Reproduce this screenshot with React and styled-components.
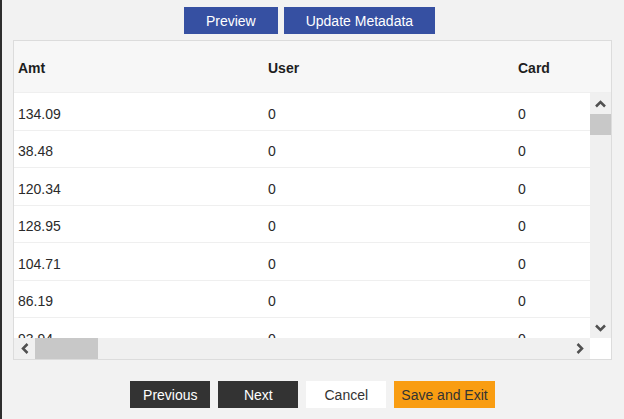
import styled, {createGlobalStyle} from 'styled-components';

const GlobalStyle = createGlobalStyle`
  html, body {
    margin: 0;
    padding: 0;
    height: 100%;
    overflow: hidden;
    background: #f2f2f2;
  }
`;

const Page = styled.div`
  font-family: 'Liberation Sans', Arial, sans-serif;
  font-size: 14px;
  box-sizing: border-box;
  height: 100vh;
  border-left: 2px solid #2e2e2e;
  padding: 7px 12px 0 11px;
  display: flex;
  flex-direction: column;
`;

const Toolbar = styled.div`
  display: flex;
  justify-content: center;
  gap: 6px;
  padding-right: 6px;
  margin-bottom: 6px;
`;

const Button = styled.button`
  font-family: inherit;
  font-size: 14px;
  height: 27px;
  border: none;
  border-radius: 0;
  padding: ${({$wide}) => ($wide ? '0 22px' : '0 7px')};
  min-width: ${({$wide}) => ($wide ? '0' : '80px')};
  cursor: pointer;
  background: ${({$variant}) =>
    ({primary: '#3650a2', dark: '#333333', light: '#ffffff', warn: '#f99d12'})[$variant]};
  color: ${({$variant}) => ($variant === 'primary' || $variant === 'dark' ? '#ffffff' : '#333333')};
`;

const Panel = styled.div`
  height: 320px;
  box-sizing: border-box;
  border: 1px solid #dcdcdc;
  background: #ffffff;
  display: flex;
  flex-direction: column;
  overflow: hidden;
`;

const HeaderRow = styled.div`
  height: 52px;
  box-sizing: border-box;
  flex: none;
  display: flex;
  background: #f7f7f7;
  border-bottom: 1px solid #efefef;
  padding-top: 3px;
  overflow: hidden;
`;

const HeadCell = styled.div`
  flex: none;
  width: 250px;
  padding-left: 4px;
  box-sizing: border-box;
  display: flex;
  align-items: center;
  font-weight: bold;
  color: #1e1e1e;
`;

const Body = styled.div`
  flex: 1;
  min-height: 0;
  display: grid;
  grid-template-columns: 1fr 21px;
  grid-template-rows: 1fr 21px;
`;

const Viewport = styled.div`
  overflow: hidden;
  min-width: 0;
  min-height: 0;
`;

const Row = styled.div`
  display: flex;
  height: 37.5px;
  box-sizing: border-box;
  border-bottom: 1px solid #efefef;
  padding-top: 5px;
`;

const Cell = styled.div`
  flex: none;
  width: 250px;
  padding-left: 4px;
  box-sizing: border-box;
  display: flex;
  align-items: center;
  color: #2a2a2a;
`;

const Track = styled.div`
  background: #f0f0f0;
  display: flex;
  flex-direction: ${({$vertical}) => ($vertical ? 'column' : 'row')};
`;

const Arrow = styled.div`
  flex: none;
  width: 21px;
  height: 21px;
  display: flex;
  align-items: center;
  justify-content: center;
  margin-left: ${({$end}) => ($end ? 'auto' : '0')};
  margin-top: ${({$endV}) => ($endV ? 'auto' : '0')};
`;

const Thumb = styled.div`
  flex: none;
  background: #c8c8c8;
  width: ${({$vertical}) => ($vertical ? '21px' : '63px')};
  height: 21px;
`;

const Corner = styled.div`
  background: #ffffff;
`;

const Footer = styled.div`
  display: flex;
  justify-content: center;
  gap: 8px;
  margin-top: 21px;
`;

const chevrons = {
  up: '1,6.5 5.5,2 10,6.5',
  down: '1,1.5 5.5,6 10,1.5',
  left: '6.5,1 2,5.5 6.5,10',
  right: '1.5,1 6,5.5 1.5,10',
};

function Chevron({dir}) {
  const vertical = dir === 'up' || dir === 'down';
  return (
    <svg width={vertical ? 11 : 8} height={vertical ? 8 : 11} viewBox={vertical ? '0 0 11 8' : '0 0 8 11'}>
      <polyline points={chevrons[dir]} fill="none" stroke="#505050" strokeWidth="2.5" />
    </svg>
  );
}

const columns = ['Amt', 'User', 'Card'];
const amounts = ['134.09', '38.48', '120.34', '128.95', '104.71', '86.19', '93.94', '112.50'];

function App() {
  return (
    <>
      <GlobalStyle />
      <Page>
        <Toolbar>
          <Button $variant="primary" $wide>Preview</Button>
          <Button $variant="primary" $wide>Update Metadata</Button>
        </Toolbar>
        <Panel>
          <HeaderRow>
            {columns.map((c) => (
              <HeadCell key={c}>{c}</HeadCell>
            ))}
          </HeaderRow>
          <Body>
            <Viewport>
              {amounts.map((a) => (
                <Row key={a}>
                  <Cell>{a}</Cell>
                  <Cell>0</Cell>
                  <Cell>0</Cell>
                </Row>
              ))}
            </Viewport>
            <Track $vertical>
              <Arrow><Chevron dir="up" /></Arrow>
              <Thumb $vertical />
              <Arrow $endV><Chevron dir="down" /></Arrow>
            </Track>
            <Track>
              <Arrow><Chevron dir="left" /></Arrow>
              <Thumb />
              <Arrow $end><Chevron dir="right" /></Arrow>
            </Track>
            <Corner />
          </Body>
        </Panel>
        <Footer>
          <Button $variant="dark">Previous</Button>
          <Button $variant="dark">Next</Button>
          <Button $variant="light">Cancel</Button>
          <Button $variant="warn">Save and Exit</Button>
        </Footer>
      </Page>
    </>
  );
}

export default App;
